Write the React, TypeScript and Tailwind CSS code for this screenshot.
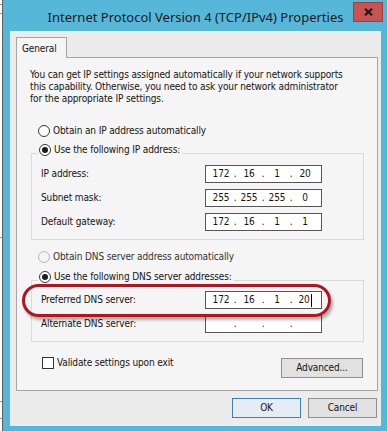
import React from "react";

function Radio({ checked, disabled }: { checked?: boolean; disabled?: boolean }) {
  return (
    <span
      className={
        "w-[12px] h-[12px] rounded-full border flex items-center justify-center shrink-0 " +
        (disabled ? "border-[#b8b8b8] bg-[#f4f4f4]" : "border-[#3a3a3a] bg-white")
      }
    >
      {checked ? <span className="w-[6px] h-[6px] rounded-full bg-[#1c1c1c]" /> : null}
    </span>
  );
}

function IpBox({ values, cursor }: { values: string[]; cursor?: boolean }) {
  return (
    <div className="w-[117px] h-[18px] border border-[#555] bg-white flex items-center pl-[4px] shrink-0">
      {values.map((v, i) => (
        <React.Fragment key={i}>
          <span className="w-[22px] h-[14px] leading-[14px] flex items-center justify-center">
            {v}
            {cursor && i === 3 ? <span className="inline-block w-px h-[13px] bg-black ml-[1px]" /> : null}
          </span>
          {i < 3 ? <span className="w-[6px] text-center leading-[14px]">.</span> : null}
        </React.Fragment>
      ))}
    </div>
  );
}

function Row({ label, values, cursor }: { label: string; values: string[]; cursor?: boolean }) {
  return (
    <div className="flex items-center h-[18px]">
      <span className="w-[164px] leading-[14px] whitespace-nowrap">{label}</span>
      <IpBox values={values} cursor={cursor} />
    </div>
  );
}

function Button({ children, w, primary }: { children: React.ReactNode; w: string; primary?: boolean }) {
  return (
    <div
      className={
        "h-[20px] flex items-center justify-center border leading-[14px] whitespace-nowrap " +
        w +
        (primary ? " border-[#3c7fc6] bg-[#e5ecf4]" : " border-[#8f8f8f] bg-[#e1e1e1]")
      }
    >
      {children}
    </div>
  );
}

export default function App() {
  return (
    <div className="relative w-[387px] h-[431px] overflow-hidden bg-[#57b7d9] flex font-['DejaVu_Sans_Condensed','DejaVu_Sans',sans-serif] text-[10px] tracking-[-0.13px] text-[#141414]">
      {/* strip of a window behind */}
      <div className="w-[3px] h-full shrink-0 bg-white border-r border-[#5d5d5d] flex flex-col">
        <div className="mt-[4px] h-px bg-[#9a9a9a]" />
        <div className="mt-[8px] h-px bg-[#9a9a9a]" />
        <div className="mt-[223px] h-px bg-[#9a9a9a]" />
        <div className="mt-[163px] h-px bg-[#9a9a9a]" />
        <div className="mt-[16px] h-px bg-[#9a9a9a]" />
      </div>

      <div className="w-[384px] flex flex-col">
        {/* title bar */}
        <div className="h-[31px] flex items-start shrink-0">
          <div className="w-[35px] shrink-0" />
          <div className="flex-1 min-w-0 text-center font-['Noto_Sans',sans-serif] text-[13px] tracking-normal leading-[20px] pt-[7px] text-[#1a1a1a] whitespace-nowrap">
            Internet Protocol Version 4 (TCP/IPv4) Properties
          </div>
          <div className="w-[30px] h-[20px] mt-[2px] mr-[4px] shrink-0 bg-[#c75451] border border-[#9c3b38] flex items-center justify-center">
            <svg width="9" height="8" viewBox="0 0 9 8">
              <path d="M1 0.8 L8 7.2 M8 0.8 L1 7.2" stroke="#1a1a1a" strokeWidth="2.2" />
            </svg>
          </div>
        </div>

        {/* client area */}
        <div className="w-[371px] flex-1 ml-[7px] mb-[5px] bg-[#ececec] pl-[6px] pr-[3px] pt-[6px] flex flex-col">
          <div className="flex">
            <div className="relative z-10 w-[51px] h-[21px] -mb-px border border-b-0 border-[#a6a6a6] bg-[#f5f5f5] pl-[5px] pt-[4px] leading-[14px]">
              General
            </div>
          </div>
          <div className="w-[362px] border border-[#a6a6a6] bg-[#f5f5f5] px-[13px] pt-[11px] pb-[12px] flex flex-col">
            <div className="leading-[12px] whitespace-nowrap">
              You can get IP settings assigned automatically if your network supports
              <br />
              this capability. Otherwise, you need to ask your network administrator
              <br />
              for the appropriate IP settings.
            </div>

            <div className="mt-[19px] h-[14px] flex items-center gap-[3px] ml-[8px]">
              <Radio />
              <span className="leading-[14px]">Obtain an IP address automatically</span>
            </div>

            <div className="mt-[15px] ml-[1px] border border-[#dadada] px-[9px] pb-[8px] flex flex-col">
              <div className="-mt-[11px] h-[14px] flex items-center gap-[3px] self-start -ml-[3px] pl-[1px] pr-[2px] bg-[#f5f5f5]">
                <Radio checked />
                <span className="leading-[14px]">Use the following IP address:</span>
              </div>
              <div className="mt-[8px] flex flex-col gap-[6px]">
                <Row label="IP address:" values={["172", "16", "1", "20"]} />
                <Row label="Subnet mask:" values={["255", "255", "255", "0"]} />
                <Row label="Default gateway:" values={["172", "16", "1", "1"]} />
              </div>
            </div>

            <div className="mt-[10px] h-[14px] flex items-center gap-[3px] ml-[8px]">
              <Radio disabled />
              <span className="leading-[14px] text-[#333]">Obtain DNS server address automatically</span>
            </div>

            <div className="mt-[16px] ml-[1px] border border-[#dadada] px-[9px] pb-[8px] flex flex-col">
              <div className="-mt-[11px] h-[14px] flex items-center gap-[3px] self-start -ml-[3px] pl-[1px] pr-[2px] bg-[#f5f5f5]">
                <Radio checked />
                <span className="leading-[14px]">Use the following DNS server addresses:</span>
              </div>
              <div className="mt-[7px] flex flex-col gap-[6px]">
                <Row label="Preferred DNS server:" values={["172", "16", "1", "20"]} cursor />
                <Row label="Alternate DNS server:" values={["", "", "", ""]} />
              </div>
            </div>

            <div className="mt-[16px] flex justify-between items-start">
              <div className="flex items-center gap-[3px] h-[12px] -mt-[1px] ml-[12px]">
                <span className="w-[12px] h-[12px] border border-[#333] bg-white" />
                <span className="leading-[14px]">Validate settings upon exit</span>
              </div>
              <div className="mr-[1px]">
                <Button w="w-[82px]">Advanced...</Button>
              </div>
            </div>
          </div>

          <div className="mt-[7px] flex justify-end gap-[7px] mr-[1px]">
            <Button w="w-[69px]" primary>
              OK
            </Button>
            <Button w="w-[69px]">Cancel</Button>
          </div>
        </div>
      </div>

      {/* red annotation */}
      <div className="absolute left-[22px] top-[284px] w-[309px] h-[33px] rounded-full border-[3px] border-[#b3141d] shadow-[2px_3px_3px_rgba(0,0,0,0.3)]" />
    </div>
  );
}
